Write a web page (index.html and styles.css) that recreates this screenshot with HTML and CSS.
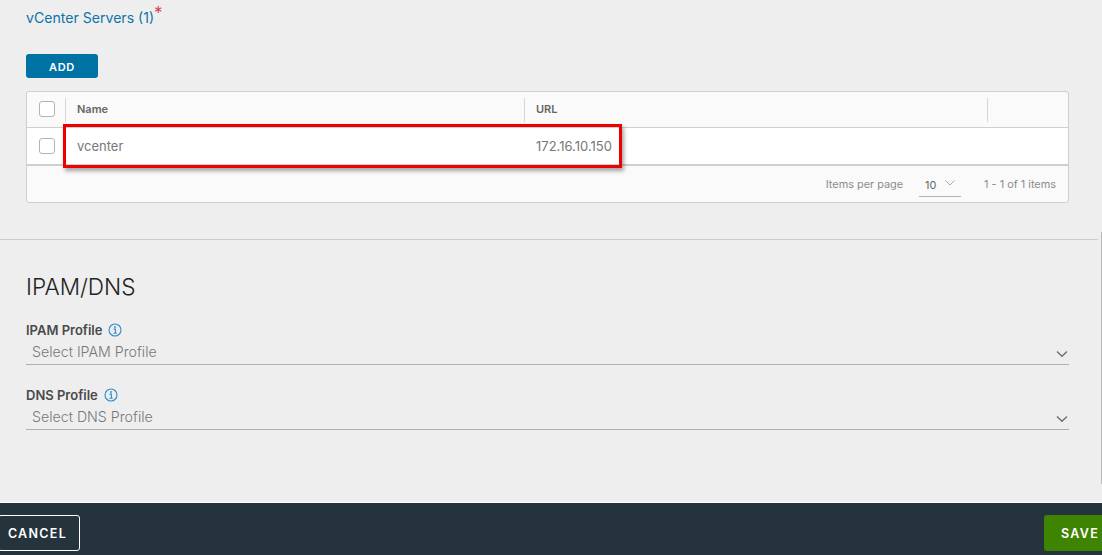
FILE: index.html
```html
<!DOCTYPE html>
<html lang="en">
<head>
<meta charset="utf-8">
<title>vCenter Servers</title>
<link rel="stylesheet" href="styles.css">
</head>
<body>
<div class="page">
  <main class="content">
    <section class="servers">
      <h2 class="section-link">vCenter Servers (1)<span class="req">*</span></h2>
      <button class="btn-add" type="button">ADD</button>
      <div class="grid">
        <div class="grid-row grid-head">
          <div class="cell-check"><span class="checkbox"></span></div>
          <div class="cell cell-name"><span class="sep"></span>Name</div>
          <div class="cell cell-url"><span class="sep"></span>URL</div>
          <div class="cell cell-end"><span class="sep"></span></div>
        </div>
        <div class="grid-row grid-body">
          <div class="cell-check"><span class="checkbox"></span></div>
          <div class="cell cell-name">vcenter</div>
          <div class="cell cell-url">172.16.10.150</div>
          <div class="cell cell-end"></div>
        </div>
        <div class="grid-foot">
          <span>Items per page</span>
          <span class="pager"><span>10</span>
            <svg class="pager-chev" width="10" height="6" viewBox="0 0 10 6"><path d="M0.5 0.5 L5 5 L9.5 0.5" fill="none" stroke="#a8a8a8" stroke-width="1"/></svg>
          </span>
          <span class="count">1 - 1 of 1 items</span>
        </div>
        <div class="highlight"></div>
      </div>
    </section>
    <hr class="divider">
    <section class="ipam">
      <h2 class="heading">IPAM/DNS</h2>
      <div class="field">
        <label class="field-label">IPAM Profile
          <svg class="info" width="14" height="14" viewBox="0 0 14 14"><circle cx="7" cy="7" r="6" fill="none" stroke="#2f8ccc" stroke-width="1.1"/><path d="M5.6 6.1 H7.4 V10.2 M5.4 10.3 H8.8" fill="none" stroke="#2f8ccc" stroke-width="1.1"/><circle cx="7" cy="4" r="0.9" fill="#2f8ccc"/></svg>
        </label>
        <div class="select"><span>Select IPAM Profile</span>
          <svg class="chev" width="12" height="8" viewBox="0 0 12 8"><path d="M1 1.5 L6 6.2 L11 1.5" fill="none" stroke="#6c7479" stroke-width="1.5"/></svg>
        </div>
      </div>
      <div class="field">
        <label class="field-label">DNS Profile
          <svg class="info" width="14" height="14" viewBox="0 0 14 14"><circle cx="7" cy="7" r="6" fill="none" stroke="#2f8ccc" stroke-width="1.1"/><path d="M5.6 6.1 H7.4 V10.2 M5.4 10.3 H8.8" fill="none" stroke="#2f8ccc" stroke-width="1.1"/><circle cx="7" cy="4" r="0.9" fill="#2f8ccc"/></svg>
        </label>
        <div class="select"><span>Select DNS Profile</span>
          <svg class="chev" width="12" height="8" viewBox="0 0 12 8"><path d="M1 1.5 L6 6.2 L11 1.5" fill="none" stroke="#6c7479" stroke-width="1.5"/></svg>
        </div>
      </div>
    </section>
    <div class="scroll-edge"></div>
  </main>
  <footer class="actions">
    <button class="btn-cancel" type="button">CANCEL</button>
    <button class="btn-save" type="button">SAVE</button>
  </footer>
</div>
</body>
</html>
```
FILE: styles.css
```css
* { box-sizing: border-box; }
html, body { margin: 0; padding: 0; height: 555px; overflow: hidden; }
body { font-family: Inter, "Noto Sans", sans-serif; background: #eeeeee; color: #565656; }
.page { display: flex; flex-direction: column; height: 555px; }
.content { position: relative; height: 502px; overflow: hidden; background: #eeeeee; }
.servers { padding: 7px 33px 0 26px; }
.section-link { margin: 0; height: 47px; font-size: 14.1px; line-height: 21px; font-weight: 400; color: #0f74a8; }
.req { color: #d9405b; font-size: 17px; line-height: 10px; position: relative; top: -4px; }
.btn-add { display: block; width: 72px; height: 24px; border: 0; border-radius: 3px; background: #0072a3; color: #fff; font-family: inherit; font-size: 11px; font-weight: 600; letter-spacing: 0.7px; padding: 1px 0 0; }
.grid { position: relative; margin-top: 13px; height: 112px; border: 1px solid #cfcfcf; border-radius: 3px; background: #fafafa; display: flex; flex-direction: column; }
.grid-row { display: flex; align-items: center; }
.grid-head { height: 36px; font-size: 11px; font-weight: 600; color: #666; border-bottom: 1px solid #cfcfcf; padding-bottom: 2px; }
.grid-body { height: 38px; background: #fff; font-size: 13px; color: #777; border-bottom: 2px solid #cfcfcf; }
.cell-check { width: 38px; flex: none; display: flex; justify-content: center; padding-left: 1px; }
.cell { position: relative; height: 100%; display: flex; align-items: center; padding-left: 12px; }
.cell-name { width: 459px; }
.cell-url { width: 463px; }
.cell-end { flex: 1; }
.sep { position: absolute; left: 0; top: 6px; bottom: 3px; width: 1px; background: #d7d7d7; }
.checkbox { display: block; width: 16px; height: 16px; border: 1px solid #b3b3b3; border-radius: 3px; background: #fff; }
.grid-foot { flex: 1; display: flex; align-items: center; justify-content: flex-end; padding: 0 12px 0 0; font-size: 10.9px; color: #8c8c8c; }
.pager { display: flex; align-items: center; justify-content: space-between; width: 42px; height: 24px; margin: 2px 23px 0 16px; padding: 0 6px; border-bottom: 1px solid #b3b3b3; color: #666; }
.pager-chev { margin-top: -3px; }
.highlight { position: absolute; left: 36px; top: 32px; width: 559px; height: 44px; border: 3px solid #ee0000; box-shadow: 2px 3px 4px rgba(0,0,0,0.35); pointer-events: none; }
.divider { margin: 36px 4px 0 0; border: 0; border-top: 1px solid #cccccc; height: 0; }
.ipam { padding: 33px 33px 0 26px; }
.heading { margin: 0 0 20px; font-size: 22.6px; line-height: 28px; font-weight: 300; color: #222; }
.field { margin-bottom: 21px; }
.field-label { display: flex; align-items: center; gap: 6px; height: 18px; font-size: 13px; font-weight: 600; color: #4a4a4a; }
.select { display: flex; align-items: center; justify-content: space-between; height: 26px; padding: 0 1px 0 6px; border-bottom: 1px solid #b0b0b0; font-size: 14.2px; font-weight: 300; color: #777; }
.chev { margin-top: 4px; }
.scroll-edge { position: absolute; right: 0; top: 232px; bottom: 18px; width: 1px; background: #b8b8b8; }
.actions { flex: 1; border-top: 1px solid #fff; background: #25333d; display: flex; align-items: flex-start; justify-content: space-between; overflow: hidden; }
.btn-cancel { width: 82px; height: 36px; margin: 12px 0 0 -2px; border: 1px solid #fff; border-radius: 3px; background: transparent; color: #fff; font-family: inherit; font-size: 12.5px; font-weight: 600; letter-spacing: 1.3px; padding: 0 3px 0 0; }
.btn-save { width: 72px; height: 36px; margin: 12px -14px 0 0; border: 0; border-radius: 3px; background: #3f8400; color: #fff; font-family: inherit; font-size: 12.5px; font-weight: 600; letter-spacing: 1.3px; padding: 0; }
```
